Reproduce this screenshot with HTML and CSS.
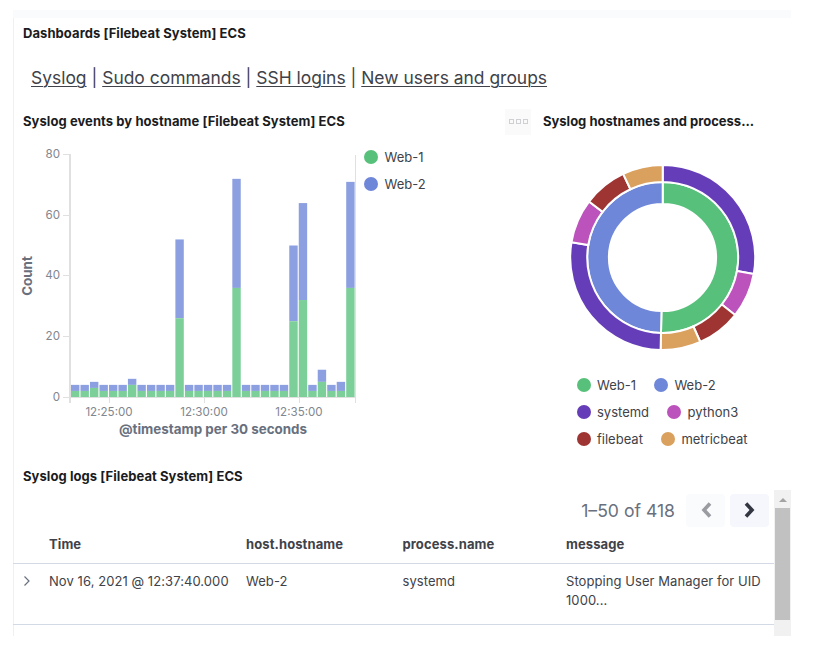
FILE: index.html
```html
<!DOCTYPE html>
<html lang="en">
<head>
<meta charset="utf-8">
<title>[Filebeat System] Syslog dashboard</title>
<link rel="stylesheet" href="styles.css">
</head>
<body>
<main class="dashboard">
  <section class="panel nav-panel">
    <h2 class="title">Dashboards [Filebeat System] ECS</h2>
    <nav class="links"><a>Syslog</a> | <a>Sudo commands</a> | <a>SSH logins</a> | <a>New users and groups</a></nav>
  </section>
  <div class="charts">
    <section class="panel events">
      <header class="events-head">
        <h2 class="title">Syslog events by hostname [Filebeat System] ECS</h2>
        <button class="options" aria-label="Panel options"><i></i><i></i><i></i></button>
      </header>
      <div class="events-body">
        <svg id="histogram" class="histogram" width="344" height="310" viewBox="13 135 344 310"></svg>
        <ul class="legend vertical">
          <li><b class="dot web1"></b>Web-1</li>
          <li><b class="dot web2"></b>Web-2</li>
        </ul>
      </div>
    </section>
    <section class="panel hosts">
      <h2 class="title">Syslog hostnames and process...</h2>
      <svg id="donut" class="donut" width="188" height="188" viewBox="-94.7 -94.5 188 188"></svg>
      <div class="legend-rows">
        <ul class="legend"><li><b class="dot web1"></b>Web-1</li><li><b class="dot web2"></b>Web-2</li></ul>
        <ul class="legend"><li><b class="dot systemd"></b>systemd</li><li><b class="dot python"></b>python3</li></ul>
        <ul class="legend"><li><b class="dot filebeat"></b>filebeat</li><li><b class="dot metricbeat"></b>metricbeat</li></ul>
      </div>
    </section>
  </div>
  <section class="panel logs">
    <h2 class="title">Syslog logs [Filebeat System] ECS</h2>
    <div class="logs-view">
      <div class="logs-content">
        <div class="pager">
          <span class="count">1–50 of 418</span>
          <button class="page prev" aria-label="Previous"><svg width="12" height="16" viewBox="0 0 12 16"><path d="M10 1.5 4 8l6 6.5"/></svg></button>
          <button class="page next" aria-label="Next"><svg width="12" height="16" viewBox="0 0 12 16"><path d="m2 1.5 6 6.5-6 6.5"/></svg></button>
        </div>
        <div class="row head"><span></span><span>Time</span><span>host.hostname</span><span>process.name</span><span>message</span></div>
        <div class="row entry"><span class="expand"><svg width="8" height="12" viewBox="0 0 8 12"><path d="m1.5 1.5 4.5 4.5-4.5 4.5"/></svg></span><span>Nov 16, 2021 @ 12:37:40.000</span><span>Web-2</span><span>systemd</span><span>Stopping User Manager for UID<br>1000...</span></div>
      </div>
      <div class="scrollbar"><i class="arrow"></i><i class="thumb"></i></div>
    </div>
  </section>
</main>
<script src="charts.js"></script>
</body>
</html>
```

FILE: styles.css
```css
* { box-sizing: border-box; }
body { margin: 0; background: #fff; font-family: Inter, "Liberation Sans", sans-serif; font-size: 13px; color: #404249; }
.dashboard { width: 778px; height: 626px; margin: 10px 0 0 13px; border-top: 8px solid #fafbfd; box-shadow: inset 1px 0 #edf0f5; overflow: hidden; }
.title { margin: 0 0 2px; font-size: 13px; letter-spacing: 0.07px; line-height: 14px; font-weight: 700; color: #1a1c21; white-space: nowrap; }
ul { margin: 0; padding: 0; list-style: none; }
button { border: 0; padding: 0; }
.nav-panel { height: 90px; padding: 8px 0 0 10px; }
.links { margin: 26px 0 0 8px; font-size: 17.46px; line-height: 24px; white-space: nowrap; }
.links a { text-decoration: underline; text-decoration-thickness: 1px; text-underline-offset: 2px; }
.charts { display: flex; height: 346px; }
.events { width: 520px; }
.events-head { display: flex; align-items: center; justify-content: space-between; height: 27px; padding: 0 2px 0 10px; }
.options { width: 26px; height: 26px; background: #fafafa; display: flex; align-items: center; justify-content: center; gap: 2px; }
.options i { width: 5px; height: 5px; border: 1px solid #cfd0d3; }
.events-body { display: flex; align-items: flex-start; }
.histogram { display: block; flex: none; }
.legend { display: flex; gap: 18px; height: 27px; align-items: center; }
.legend li { display: flex; align-items: center; gap: 6.5px; line-height: 20px; }
.vertical { flex-direction: column; align-items: flex-start; gap: 7px; height: auto; padding: 12px 0 0 7px; }
.dot { width: 14px; height: 14px; border-radius: 50%; }
.web1 { background: #57c17b; fill: #57c17b; }
.web2 { background: #6f87d8; fill: #6f87d8; }
.systemd { background: #663db8; fill: #663db8; }
.python { background: #bc52bc; fill: #bc52bc; }
.filebeat { background: #9e3533; fill: #9e3533; }
.metricbeat { background: #daa05d; fill: #daa05d; }
.hosts { flex: 1; padding: 6px 0 0 10px; }
.hosts .title { letter-spacing: 0; }
.donut { display: block; margin: 35px 0 0 25px; }
.donut path { stroke: #fff; stroke-width: 2; }
.legend-rows { margin: 20px 0 0 33.5px; }
.axis { fill: #e0e0e0; }
.bar1 { fill: #7ccf98; }
.bar2 { fill: #8c9fe0; }
.tick { font-size: 11.6px; fill: #81868f; }
.axis-title { font-size: 13.4px; font-weight: 700; fill: #69707d; }
.logs { padding-top: 14.5px; }
.logs .title { margin-left: 10px; }
.logs-view { display: flex; margin-top: 7px; height: 147px; }
.logs-content { width: 761px; }
.pager { display: flex; justify-content: flex-end; align-items: center; height: 33px; margin-top: 4px; padding-right: 5px; gap: 5px; }
.count { font-size: 17.6px; color: #69707d; margin-right: 6px; }
.page { width: 39px; height: 33px; border-radius: 4px; background: #fafbfd; display: flex; align-items: center; justify-content: center; }
.page path { fill: none; stroke: #9a9ca1; stroke-width: 3.6; }
.next { background: #f5f7fc; }
.next path { stroke: #343741; }
.row { display: grid; grid-template-columns: 36px 197px 156.5px 163.5px 1fr; border-bottom: 1px solid #d3dae6; line-height: 19px; white-space: nowrap; letter-spacing: 0.07px; }
.head { height: 37px; padding-top: 8px; font-weight: 700; letter-spacing: 0.1px; }
.entry { height: 61px; padding-top: 8px; }
.expand { padding: 1px 0 0 10px; }
.expand path { fill: none; stroke: #69707d; stroke-width: 1.2; }
.scrollbar { width: 17px; background: #f1f1f1; display: flex; flex-direction: column; align-items: center; }
.arrow { margin-top: 8px; border: 4px solid transparent; border-top: 0; border-bottom: 4px solid #a3a3a3; }
.thumb { width: 15px; height: 112px; margin-top: 6px; background: #c1c1c1; }
```

FILE: charts.js
```js
const NS = "http://www.w3.org/2000/svg";
function add(parent, tag, attrs, text) {
  const el = document.createElementNS(NS, tag);
  for (const key in attrs) el.setAttribute(key, attrs[key]);
  if (text) el.textContent = text;
  parent.appendChild(el);
}

// Stacked histogram: [total, Web-1 share] for each 30 second bucket
const chart = document.getElementById("histogram");
const special = { 2: [5, 3], 6: [6, 4], 11: [52, 26], 17: [72, 36], 23: [50, 25], 24: [64, 32], 26: [9, 5], 28: [5, 2], 29: [71, 36] };
const unit = 3.03, base = 397;
for (let i = 0; i < 30; i++) {
  const [total, web1] = special[i] || [4, 2];
  const x = 71 + i * 9.49;
  add(chart, "rect", { class: "bar2", x, y: base - total * unit, width: 8.4, height: (total - web1) * unit });
  add(chart, "rect", { class: "bar1", x, y: base - web1 * unit, width: 8.4, height: web1 * unit });
}
add(chart, "rect", { class: "axis", x: 69, y: 154, width: 2, height: 249 });
add(chart, "rect", { class: "axis", x: 69, y: 397, width: 287, height: 1 });
add(chart, "rect", { class: "axis", x: 355, y: 155, width: 1, height: 248 });
for (const v of [0, 20, 40, 60, 80]) {
  const y = Math.floor(base - v * unit);
  add(chart, "rect", { class: "axis", x: 63, y, width: 6, height: 1 });
  add(chart, "text", { class: "tick", x: 60, y: y + 4, "text-anchor": "end" }, String(v));
}
[["12:25:00", 109], ["12:30:00", 204], ["12:35:00", 299]].forEach(([label, x]) => {
  add(chart, "rect", { class: "axis", x, y: 398, width: 1, height: 5 });
  add(chart, "text", { class: "tick", x, y: 416, "text-anchor": "middle" }, label);
});
add(chart, "text", { class: "axis-title", x: 213, y: 434, "text-anchor": "middle" }, "@timestamp per 30 seconds");
add(chart, "text", { class: "axis-title", transform: "translate(32 276) rotate(-90)", "text-anchor": "middle" }, "Count");

// Two-ring donut: hosts inside, processes outside
const donut = document.getElementById("donut");
function slice(name, r0, r1, from, to) {
  const point = (r, deg) => {
    const a = deg * Math.PI / 180;
    return (r * Math.sin(a)).toFixed(2) + " " + (-r * Math.cos(a)).toFixed(2);
  };
  const large = to - from > 180 ? 1 : 0;
  add(donut, "path", { class: name, d: `M${point(r1, from)}A${r1} ${r1} 0 ${large} 1 ${point(r1, to)}L${point(r0, to)}A${r0} ${r0} 0 ${large} 0 ${point(r0, from)}Z` });
}
slice("web1", 53.6, 75.5, 0, 181.3);
slice("web2", 53.6, 75.5, 181.3, 360);
const names = ["systemd", "python", "filebeat", "metricbeat"];
const stops = [0, 100.3, 128.5, 156, 181.3, 279.5, 307.2, 334.7, 360];
for (let i = 0; i < 8; i++) slice(names[i % 4], 75.5, 92.5, stops[i], stops[i + 1]);
```
